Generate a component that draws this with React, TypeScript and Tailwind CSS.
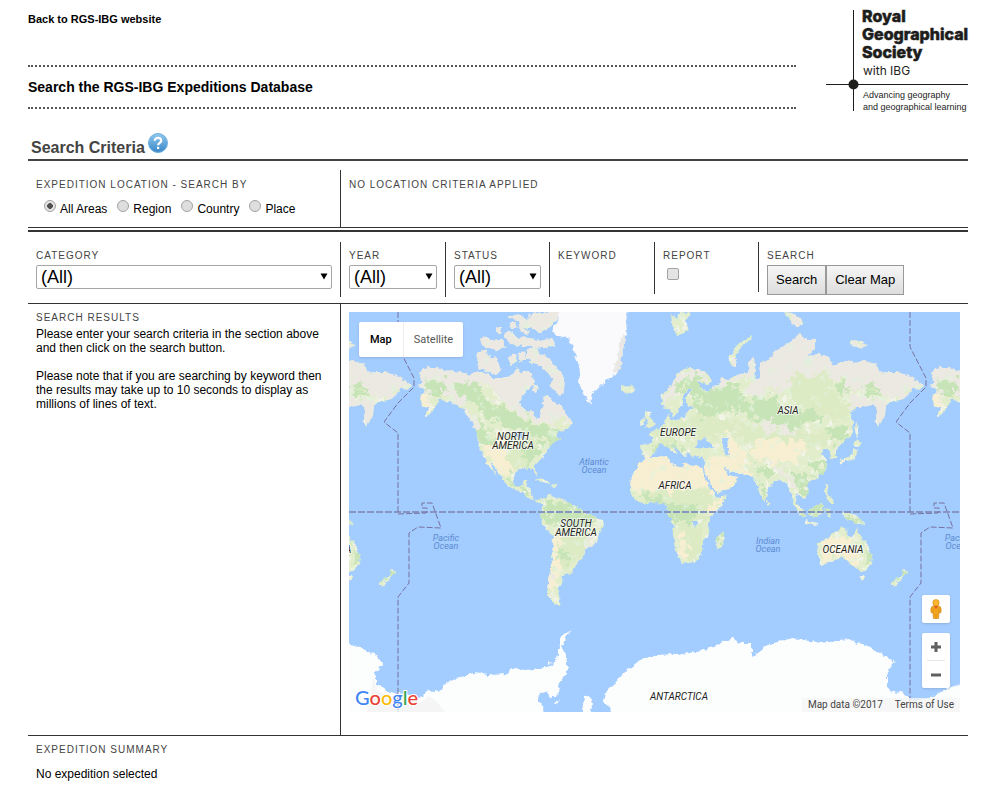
import { useState, type ReactNode } from "react";

const AREAS = ["All Areas", "Region", "Country", "Place"];

const WORLD_WIDTH = 512;

const LAND = [
  // North America
  "M68 73L73 70 69 61 78 55 88 55 95 59 101 58 114 61 122 63 128 60 138 61 144 66 158 66 164 62 168 56 173 62 178 58 183 65 187 70 178 78 173 85 170 91 174 97 184 100 187 108 191 106 191 100 195 94 193 86 198 83 203 87 208 93 212 93 219 105 224 111 216 118 209 120 206 125 212 127 204 131 199 138 194 146 188 150 184 155 188 160 189 165 185 160 181 156 171 157 166 161 164 170 168 175 173 173 177 168 179 169 177 175 183 177 182 183 185 188 193 187 194 191 188 191 181 187 174 181 164 177 155 171 151 163 146 155 141 149 144 156 148 164 139 153 134 143 129 133 128 120 124 111 119 105 114 97 106 92 98 89 91 87 88 93 83 100 74 106 80 97 73 93 71 85 76 80 73 76Z",
  // Canadian arctic
  "M129 41L136 38 139 44 147 46 152 58 147 63 138 59 131 57 128 51Z",
  "M131 27L138 24 142 29 153 28 157 35 149 38 139 36 133 33Z",
  "M155 22L161 18 168 26 177 24 180 31 169 34 160 31Z",
  "M158 5L170 2 178 8 183 2 200 0 212 0 206 9 198 17 190 21 183 15 174 17 169 9Z",
  "M170 29L180 26 192 29 203 26 206 33 196 36 184 35 173 35Z",
  "M178 38L186 34 190 41 199 46 208 56 216 66 215 77 212 85 207 80 200 73 205 67 199 61 192 54 183 51 178 46Z",
  "M160 44L166 42 168 50 162 53Z",
  "M169 42L175 39 177 47 172 50Z",
  "M184 72L190 75 188 81 183 79Z",
  "M146 15L152 15 151 21 146 20Z",
  "M160 11L165 9 168 15 163 17Z",
  "M170 12L176 18 182 19 178 23 171 20Z",
  // Caribbean
  "M186 168L193 166 202 171 193 170Z",
  "M202 172L209 173 207 176 202 175Z",
  // South America
  "M191 202L194 194 194 187 201 183 206 185 213 187 223 193 231 196 236 201 247 205 254 208 255 214 250 220 248 230 238 236 233 246 226 255 223 261 214 264 213 270 209 276 209 284 211 293 205 291 199 284 199 268 203 248 204 225 199 219 193 212Z",
  // Iceland, Britain, Ireland
  "M271 74L275 72 278 75 284 73 286 77 279 82 274 80Z",
  "M296 99L302 100 300 105 304 108 306 113 302 116 296 116 299 111 297 107Z",
  "M292 108L295 105 296 112 291 114Z",
  // Svalbard, Novaya Zemlya, Severnaya Zemlya, New Siberian
  "M321 3L329 6 331 0 343 1 336 9 339 18 334 21 328 24 324 12Z",
  "M380 53L381 43 385 37 391 30 403 24 402 28 393 35 387 43 387 55Z",
  "M435 0L444 1 452 7 454 14 447 14 441 8Z",
  "M501 29L509 28 519 33 516 36 502 34Z",
  // Eurasia
  "M313 92L312 84 317 79 323 73 328 62 338 56 349 57 358 61 363 69 358 73 349 69 353 77 361 79 364 74 369 73 372 66 378 68 391 62 399 61 400 49 404 44 407 52 406 68 411 66 412 50 421 48 426 38 439 32 451 21 456 27 466 28 466 36 459 43 469 42 481 45 483 53 491 51 498 48 507 51 514 48 528 53 531 61 541 60 554 61 564 66 574 73 571 78 563 76 559 83 551 88 541 90 537 94 536 103 529 115 526 108 529 97 524 92 519 94 508 95 501 102 504 110 503 123 494 131 487 136 487 146 482 147 480 139 474 137 473 142 478 150 477 158 468 166 458 170 460 180 454 187 448 182 447 190 451 198 447 196 443 186 441 178 438 171 431 168 424 170 419 177 416 191 411 182 407 170 401 163 391 162 381 160 374 153 378 163 389 165 387 171 381 176 368 181 361 171 355 157 356 146 350 145 341 144 338 139 336 145 329 138 323 130 325 135 329 142 325 142 318 133 311 132 307 138 303 143 298 146 293 143 292 133 303 132 304 126 299 121 308 118 316 111 319 102 322 108 336 106 338 98 348 95 339 94 337 87 343 77 341 76 333 84 333 92 329 98 324 105 320 97 315 95Z",
  // Africa and Madagascar
  "M291 150L299 145 308 145 319 144 320 151 333 156 335 151 353 155 356 166 364 180 368 186 378 184 373 194 361 205 359 212 361 221 354 230 353 240 346 250 333 252 328 241 323 224 325 214 319 201 318 193 308 190 294 192 284 186 281 178 282 166Z",
  "M374 219L376 225 372 236 368 237 367 227Z",
  // Japan, Sakhalin, Sri Lanka
  "M508 128L513 131 508 135 504 132Z",
  "M506 136L508 142 504 148 496 149 493 152 491 148 502 144Z",
  "M507 109L510 118 508 127 506 118Z",
  "M418 187L421 191 418 194Z",
  // South east Asia
  "M476 172L479 173 480 183 485 191 480 191 476 180Z",
  "M442 187L447 191 455 200 457 207 451 203Z",
  "M456 208L469 211 469 213 456 211Z",
  "M459 199L465 195 471 190 475 193 473 203 467 205 460 203Z",
  "M476 197L483 196 479 200 482 206 478 203Z",
  "M492 200L499 201 507 203 512 208 517 213 507 211 499 208Z",
  // Australia, Tasmania, New Zealand
  "M468 231L478 226 486 220 493 216 499 218 498 223 504 226 508 215 512 226 519 233 523 243 522 252 518 258 512 260 508 256 501 252 498 248 491 246 479 251 471 253 469 243Z",
  "M511 264L516 264 513 269Z",
  "M554 255L559 260 555 264 550 270 544 275 542 272 552 264Z",
];

const LAKES = [
  "M346 136L349 129 356 126 360 130 365 136 356 136Z",
  "M373 126L380 126 378 132 381 143 375 142Z",
  "M163 121L172 120 176 127 170 125Z",
  "M344 209L348 210 347 214 344 213Z",
];

const TUNDRA =
  "M60 50L130 55 215 60 225 104 205 112 186 108 168 100 152 90 138 70 122 76 116 96 92 82 70 95ZM112 100L124 104 130 122 122 122ZM120 -10L220 -10 225 90 170 66 120 66ZM310 100L326 60 360 55 356 66 337 68 326 84 314 96ZM365 76L400 64 402 86 418 80 450 72 490 66 500 80 540 90 582 76 550 45 450 5 370 60ZM500 76L535 80 538 118 520 98 500 98ZM412 103L430 112 450 118 440 122 410 116ZM200 235L250 222 240 240 212 244ZM197 262L204 262 204 284 200 284ZM460 170L440 162 442 176 455 180ZM425 148L434 158 445 162 426 160ZM335 214L355 210 352 230 335 222Z";

const FOREST =
  "M74 66L92 70 100 84 82 84ZM104 68L128 70 132 84 148 94 170 102 182 112 204 116 214 122 200 130 184 122 166 118 148 112 136 100 120 88 108 80ZM128 110L140 114 142 128 152 126 148 136 132 130ZM174 132L196 134 188 148 176 152ZM154 160L166 172 184 178 180 184 160 172ZM196 186L232 196 246 206 232 218 206 214 194 206ZM326 72L350 64 362 76 384 72 396 84 390 98 360 102 346 106 350 92 340 80ZM408 84L428 86 432 102 448 100 470 98 476 106 440 118 420 108 400 108 390 96ZM492 66L500 76 494 84 486 76ZM518 70L530 72 528 84 516 82ZM474 116L500 112 496 130 484 132ZM462 148L480 146 476 160 460 160ZM446 160L458 162 458 186 446 176ZM284 184L300 182 318 190 352 194 346 208 324 210 314 196ZM208 240L218 238 216 248ZM296 140L304 134 312 132 326 130 334 138 326 138ZM455 195L478 190 474 206 460 206ZM492 198L518 212 500 212ZM508 214L514 228 524 244 520 256 516 238ZM552 254L560 262 540 276ZM366 222L376 218 372 236ZM402 152L422 156 428 164 410 164ZM406 168L412 170 416 188 410 182Z";

const MEADOW =
  "M440 66L480 60 490 90 504 92 500 108 460 102 444 88ZM390 112L430 120 480 122 476 134 430 134 392 130ZM152 120L192 128 180 152 160 156 150 144ZM310 110L350 104 386 108 388 122 344 128 306 128ZM284 174L360 178 368 188 356 200 300 194ZM204 222L240 218 234 246 210 258 206 240ZM324 212L360 206 352 246 340 248Z";

const DESERT =
  "M140 128L152 124 160 134 158 148 166 162 156 166 142 150 134 140ZM276 168L290 146 320 140 358 152 362 178 276 178ZM356 146L376 146 398 156 398 164 388 172 368 182 358 166ZM376 120L396 138 400 152 380 150ZM404 132L430 126 456 132 452 148 428 150 406 146ZM364 184L378 184 366 202 360 196ZM326 226L338 222 342 238 332 250ZM202 246L210 246 206 280 200 278ZM474 232L490 224 504 230 512 252 490 246 474 250ZM72 84L82 86 80 98 72 94ZM204 224L208 222 208 250 203 250Z";

const GREENLAND =
  "M211 -10L209 10 203 16 208 25 219 26 224 35 227 46 231 58 229 70 234 81 238 88 242 92 244 81 253 73 259 66 269 61 271 53 273 43 274 30 278 20 277 10 280 -10Z";

const ANTARCTICA = [
  "M-10 328L11 335 20 340 28 343 34 351 26 361 28 373 41 380 57 382 71 386 79 378 91 380 94 373 104 368 114 365 124 361 140 363 158 362 162 357 178 358 191 356 203 354 207 350 209 342 211 331 211 325 223 317 216 326 213 335 218 348 218 361 211 370 208 385 201 385 196 379 190 382 189 388 194 395 196 415 -10 415Z",
  "M231 415L235 384 240 383 243 389 242 415Z",
  "M205 392L211 387 208 392Z",
  "M198 349L204 351 199 352Z",
  "M264 415L260 394 254 388 256 381 264 373 278 358 291 348 308 343 325 342 341 341 352 339 364 335 374 330 384 326 390 331 401 331 403 337 403 345 408 342 414 336 428 330 444 326 460 329 471 330 490 328 501 327 508 331 518 333 531 341 546 350 540 356 538 364 538 376 546 381 552 380 561 386 566 390 580 386 596 378 625 366 625 415Z",
];

const DATELINE =
  "M49 0V35L65 66V75L49 91 35 110 49 121V202L77 201 78 196 73 196V191H83L92 216 69 215 60 221V271L49 285V400";

type MapLabel = { x: number; y: number; lines: string[] };

const CONTINENTS: MapLabel[] = [
  { x: 164, y: 128, lines: ["NORTH", "AMERICA"] },
  { x: 227, y: 215, lines: ["SOUTH", "AMERICA"] },
  { x: 329, y: 124, lines: ["EUROPE"] },
  { x: 326, y: 177, lines: ["AFRICA"] },
  { x: 439, y: 102, lines: ["ASIA"] },
  { x: 494, y: 241, lines: ["OCEANIA"] },
  { x: 494 - WORLD_WIDTH, y: 241, lines: ["OCEANIA"] },
  { x: 330, y: 388, lines: ["ANTARCTICA"] },
];

const OCEANS: MapLabel[] = [
  { x: 245, y: 153, lines: ["Atlantic", "Ocean"] },
  { x: 97, y: 229, lines: ["Pacific", "Ocean"] },
  { x: 97 + WORLD_WIDTH, y: 229, lines: ["Pacific", "Ocean"] },
  { x: 419, y: 232, lines: ["Indian", "Ocean"] },
];

function World({ offset }: { offset: number }) {
  return (
    <g transform={`translate(${offset} 0)`}>
      <g filter="url(#coast)">
        <g clipPath="url(#land)">
          <rect width="612" height="310" fill="#e2edcb" />
          <rect width="612" height="310" filter="url(#mottlePale)" opacity="0.7" />
          <g filter="url(#terrain)">
            <path d={TUNDRA} fill="#ece9e3" />
            <path d={MEADOW} fill="#dcebc4" />
            <path d={DESERT} fill="#f8efd2" />
            <path d={FOREST} fill="#c6e4b6" />
          </g>
          <rect width="612" height="310" filter="url(#mottleGreen)" opacity="0.8" />
        </g>
        {LAKES.map((d) => (
          <path key={d} d={d} fill="#a3ccff" />
        ))}
        <path d={GREENLAND} fill="#fafafc" />
        <path
          d="M270 30L276 20 276 34 273 44 272 56 267 62 263 58 269 46Z"
          fill="#e9e8e5"
        />
      </g>
    </g>
  );
}

function MapLabels() {
  return (
    <g textAnchor="middle" fontStyle="italic" fontFamily="Roboto, sans-serif">
      {CONTINENTS.map(({ x, y, lines }) =>
        lines.map((line, i) => (
          <text
            key={`${x}-${line}`}
            x={x}
            y={y + i * 9}
            fontSize="10"
            fill="#222222"
            stroke="#ffffff"
            strokeOpacity="0.6"
            strokeWidth="2"
            paintOrder="stroke"
          >
            {line}
          </text>
        )),
      )}
      {OCEANS.map(({ x, y, lines }) =>
        lines.map((line, i) => (
          <text key={`${x}-${line}`} x={x} y={y + i * 8} fontSize="9" fill="#5b8bd0">
            {line}
          </text>
        )),
      )}
    </g>
  );
}

function WorldMap() {
  return (
    <svg
      viewBox="0 0 611 400"
      preserveAspectRatio="xMidYMid slice"
      className="block h-full w-full"
      role="img"
      aria-label="World map"
    >
      <defs>
        <clipPath id="land">
          {LAND.map((d) => (
            <path key={d} d={d} />
          ))}
        </clipPath>
        <filter id="coast" x="-12" y="-12" width="636" height="424" filterUnits="userSpaceOnUse">
          <feTurbulence type="fractalNoise" baseFrequency="0.22" numOctaves="3" seed="4" />
          <feDisplacementMap in="SourceGraphic" scale="5" xChannelSelector="R" yChannelSelector="G" />
        </filter>
        <filter id="terrain" x="0" y="0" width="612" height="310" filterUnits="userSpaceOnUse">
          <feTurbulence type="fractalNoise" baseFrequency="0.12" numOctaves="4" seed="9" />
          <feDisplacementMap in="SourceGraphic" scale="22" xChannelSelector="R" yChannelSelector="G" />
          <feGaussianBlur stdDeviation="0.6" />
        </filter>
        <filter id="mottleGreen" x="0" y="0" width="612" height="310" filterUnits="userSpaceOnUse">
          <feTurbulence type="fractalNoise" baseFrequency="0.11" numOctaves="4" seed="21" />
          <feColorMatrix values="0 0 0 0 0.76  0 0 0 0 0.89  0 0 0 0 0.71  6 0 0 0 -3.6" />
        </filter>
        <filter id="mottlePale" x="0" y="0" width="612" height="310" filterUnits="userSpaceOnUse">
          <feTurbulence type="fractalNoise" baseFrequency="0.13" numOctaves="4" seed="33" />
          <feColorMatrix values="0 0 0 0 0.94  0 0 0 0 0.93  0 0 0 0 0.88  0 6 0 0 -3.2" />
        </filter>
      </defs>
      <rect width="611" height="400" fill="#a3ccff" />
      <World offset={-WORLD_WIDTH} />
      <World offset={0} />
      <World offset={WORLD_WIDTH} />
      <g filter="url(#coast)" fill="#fcfdfd">
        {ANTARCTICA.map((d) => (
          <path key={d} d={d} />
        ))}
      </g>
      <path d="M24 364L22 384 18 400H96L88 390 80 384 72 391 56 387 40 385 28 378Z" fill="#f5f5f5" />
      <g fill="none" stroke="#77739f" strokeWidth="1">
        <path d="M0 200H611" strokeWidth="2" stroke="#8796c0" strokeDasharray="7 2" />
        <path d={DATELINE} strokeDasharray="6 2" />
        <path d={DATELINE} strokeDasharray="6 2" transform={`translate(${WORLD_WIDTH} 0)`} />
      </g>
      <MapLabels />
    </svg>
  );
}

function SocietyLogo() {
  return (
    <svg
      width="142"
      height="102"
      viewBox="0 0 142 102"
      className="shrink-0 overflow-visible"
      role="img"
      aria-label="Royal Geographical Society with IBG"
      fill="#1d1d1b"
    >
      <path d="M27 0h1v101h-1zM0 74h142v1H0z" />
      <circle cx="27.5" cy="74.5" r="5" />
      <g
        fontFamily="Inter, sans-serif"
        fontWeight="800"
        fontSize="16"
        stroke="#1d1d1b"
        strokeWidth="0.5"
      >
        <text x="36" y="12">Royal</text>
        <text x="36" y="30">Geographical</text>
        <text x="36" y="48">Society</text>
      </g>
      <text x="37" y="65" fontFamily="Inter, sans-serif" fontSize="12">
        with IBG
      </text>
      <g fontFamily="'Liberation Sans', Arial, sans-serif" fontSize="9">
        <text x="37" y="88">Advancing geography</text>
        <text x="37" y="100">and geographical learning</text>
      </g>
    </svg>
  );
}

function HelpIcon() {
  return (
    <svg width="20" height="20" viewBox="0 0 20 20" aria-hidden="true">
      <defs>
        <linearGradient id="help" x1="0" y1="0" x2="0" y2="1">
          <stop offset="0" stopColor="#8fc9ee" />
          <stop offset="1" stopColor="#3a86c8" />
        </linearGradient>
      </defs>
      <circle cx="10" cy="10" r="9.5" fill="url(#help)" stroke="#6fb0e0" />
      <path
        d="M6.8 7.8C6.8 3.8 13.2 4 13.2 7.7 13.2 10 10.1 9.8 10.1 12.2M10.1 13.8V16"
        fill="none"
        stroke="#ffffff"
        strokeWidth="2.2"
      />
    </svg>
  );
}

function Pegman() {
  return (
    <svg width="12" height="20" viewBox="0 0 12 20" aria-hidden="true">
      <path
        d="M3 7Q6 5.5 9 7 11 7.5 11.2 10L11 13.5 9 14 8.6 19.5H3.4L3 14 1 13.5 .8 10Q1 7.5 3 7Z"
        fill="#f3a41e"
        stroke="#c9871c"
        strokeWidth="0.6"
      />
      <circle cx="6" cy="3.7" r="3.2" fill="#fbb52d" stroke="#c9871c" strokeWidth="0.6" />
      <path d="M3.5 7.2H8.5L6 10Z" fill="#e0601c" />
      <path d="M6 14.5V19.5M3 9.5V13.5M9 9.5V13.5" stroke="#c9871c" strokeWidth="0.6" />
    </svg>
  );
}

function Caption({ children }: { children: ReactNode }) {
  return (
    <span className="block text-[10px] leading-[14px] tracking-[1px] text-[#444444] uppercase">
      {children}
    </span>
  );
}

function AllSelect({ label }: { label: string }) {
  return (
    <label className="block">
      <Caption>{label}</Caption>
      <span className="relative mt-[2px] block">
        <select className="block h-6 w-full appearance-none rounded-[2px] border border-[#a6a6a6] bg-white pl-1 text-[18px] leading-[22px] text-black">
          <option>(All)</option>
        </select>
        <svg
          width="8"
          height="7"
          viewBox="0 0 8 7"
          className="pointer-events-none absolute top-2 right-1"
          aria-hidden="true"
        >
          <path d="M.5 .5h7L4 6.5z" />
        </svg>
      </span>
    </label>
  );
}

export default function App() {
  const [area, setArea] = useState("All Areas");
  const [report, setReport] = useState(false);

  return (
    <div
      className="bg-white pt-2.5 pr-[29px] pb-2 pl-7 text-[12px] leading-[14px] text-black"
      style={{ fontFamily: "'Liberation Sans', Arial, sans-serif" }}
    >
      <header className="flex gap-[30px]">
        <div className="min-w-0 flex-1">
          <a href="#" className="block pt-[2px] text-[11px] font-bold">
            Back to RGS-IBG website
          </a>
          <h1 className="mt-[39px] border-y-2 border-dotted border-[#555555] py-3 text-[14px] leading-4 font-bold">
            Search the RGS-IBG Expeditions Database
          </h1>
        </div>
        <SocietyLogo />
      </header>

      <div className="mt-[21px] flex h-[28px] gap-[3px] border-b-2 border-[#444444] pl-[3px]">
        <h2 className="pt-[5px] text-[16px] leading-5 font-bold text-[#444444]">Search Criteria</h2>
        <button type="button" className="h-5" aria-label="Help">
          <HelpIcon />
        </button>
      </div>

      {/* Location */}
      <div className="grid grid-cols-[312px_1fr] border-b border-[#333333] pt-[9px]">
        <fieldset className="pl-2">
          <legend className="pt-2">
            <Caption>Expedition Location - Search By</Caption>
          </legend>
          <div className="flex gap-2.5 pt-2 pl-2">
            {AREAS.map((name) => (
              <label key={name} className="flex gap-1">
                <input
                  type="radio"
                  name="area"
                  checked={area === name}
                  onChange={() => setArea(name)}
                  className="h-3 w-3 appearance-none rounded-full border border-[#a3a3a3] bg-[#dedede] checked:bg-[radial-gradient(#505050_36%,#e4e4e4_44%)]"
                />
                <span className="pt-[2px]">{name}</span>
              </label>
            ))}
          </div>
        </fieldset>
        <div className="h-[57px] border-l border-[#333333] pt-2 pl-2">
          <Caption>No location criteria applied</Caption>
        </div>
      </div>

      {/* Filters */}
      <form
        onSubmit={(event) => event.preventDefault()}
        className="mt-[2px] grid grid-cols-[312px_105px_104px_105px_104px_1fr] items-start border-t-2 border-b border-[#333333] pt-2.5 pb-1.5"
      >
        <div className="h-[55px] px-2 pt-[7px]">
          <AllSelect label="Category" />
        </div>
        <div className="h-[55px] border-l border-[#333333] px-2 pt-[7px]">
          <AllSelect label="Year" />
        </div>
        <div className="h-[55px] border-l border-[#333333] px-2 pt-[7px]">
          <AllSelect label="Status" />
        </div>
        <div className="h-[55px] border-l border-[#333333] px-2 pt-[7px]">
          <Caption>Keyword</Caption>
        </div>
        <label className="h-[52px] border-l border-[#333333] px-2 pt-[7px]">
          <Caption>Report</Caption>
          <input
            type="checkbox"
            checked={report}
            onChange={(event) => setReport(event.target.checked)}
            className="mt-[5px] ml-1 block h-3 w-3 appearance-none rounded-[2px] border border-[#a3a3a3] bg-[#e4e4e4] checked:bg-[#555555]"
          />
        </label>
        <div className="h-[50px] border-l border-[#333333] px-2 pt-[7px]">
          <Caption>Search</Caption>
          <div className="mt-[2px] flex">
            <button
              type="submit"
              className="h-[30px] border border-[#999999] bg-linear-to-b from-[#f6f6f6] to-[#dddddd] px-2 text-[13px]"
            >
              Search
            </button>
            <button
              type="button"
              className="h-[30px] border border-[#999999] bg-linear-to-b from-[#f6f6f6] to-[#dddddd] px-2 text-[13px]"
            >
              Clear Map
            </button>
          </div>
        </div>
      </form>

      {/* Results and map */}
      <main className="grid grid-cols-[312px_1fr] border-b border-[#333333]">
        <section className="px-2 pt-[7px]">
          <Caption>Search Results</Caption>
          <p className="mt-[2px]">
            Please enter your search criteria in the section above and then click on the search
            button.
          </p>
          <p className="mt-3.5">
            Please note that if you are searching by keyword then the results may take up to 10
            seconds to display as millions of lines of text.
          </p>
        </section>
        <section className="border-l border-[#333333] px-2 pt-2 pb-[23px]">
          <div
            className="relative h-[400px] overflow-hidden"
            style={{ fontFamily: "Roboto, sans-serif" }}
          >
            <WorldMap />
            <div className="absolute top-2.5 left-2.5 flex h-[35px] rounded-[2px] bg-white text-[11px] shadow">
              <button type="button" className="border-r border-[#eeeeee] px-[11px] font-medium">
                Map
              </button>
              <button type="button" className="px-2.5 text-[#565656]">
                Satellite
              </button>
            </div>
            <div className="absolute right-2.5 bottom-6 flex w-7 flex-col gap-2.5">
              <button
                type="button"
                aria-label="Street View"
                className="flex h-7 items-center justify-center rounded-[2px] bg-white shadow"
              >
                <Pegman />
              </button>
              <div className="flex flex-col rounded-[2px] bg-white px-[5px] shadow">
                <button
                  type="button"
                  aria-label="Zoom in"
                  className="flex h-7 items-center justify-center border-b border-[#e6e6e6]"
                >
                  <svg width="10" height="10" viewBox="0 0 10 10" aria-hidden="true">
                    <path d="M3.5 0h3v3.5H10v3H6.5V10h-3V6.5H0v-3h3.5z" fill="#606060" />
                  </svg>
                </button>
                <button
                  type="button"
                  aria-label="Zoom out"
                  className="flex h-[27px] items-center justify-center"
                >
                  <svg width="10" height="10" viewBox="0 0 10 10" aria-hidden="true">
                    <path d="M0 3.5h10v3H0z" fill="#606060" />
                  </svg>
                </button>
              </div>
            </div>
            <svg
              width="66"
              height="28"
              viewBox="0 0 66 28"
              className="absolute bottom-0 left-1"
              role="img"
              aria-label="Google"
            >
              <text
                x="2"
                y="21"
                fontFamily="Lato, sans-serif"
                fontSize="20"
                fontWeight="500"
                stroke="#ffffff"
                strokeWidth="2"
                paintOrder="stroke"
              >
                <tspan fill="#4285f4">G</tspan>
                <tspan fill="#ea4335">o</tspan>
                <tspan fill="#fbbc05">o</tspan>
                <tspan fill="#4285f4">g</tspan>
                <tspan fill="#34a853">l</tspan>
                <tspan fill="#ea4335">e</tspan>
              </text>
            </svg>
            <div className="absolute right-0 bottom-0 flex gap-3 bg-[#f5f5f5]/80 px-1.5 text-[10px] text-[#444444]">
              <span>Map data ©2017</span>
              <a href="#">Terms of Use</a>
            </div>
          </div>
        </section>
      </main>

      <footer className="px-2 pt-[7px]">
        <Caption>Expedition Summary</Caption>
        <p className="mt-2.5">No expedition selected</p>
      </footer>
    </div>
  );
}
